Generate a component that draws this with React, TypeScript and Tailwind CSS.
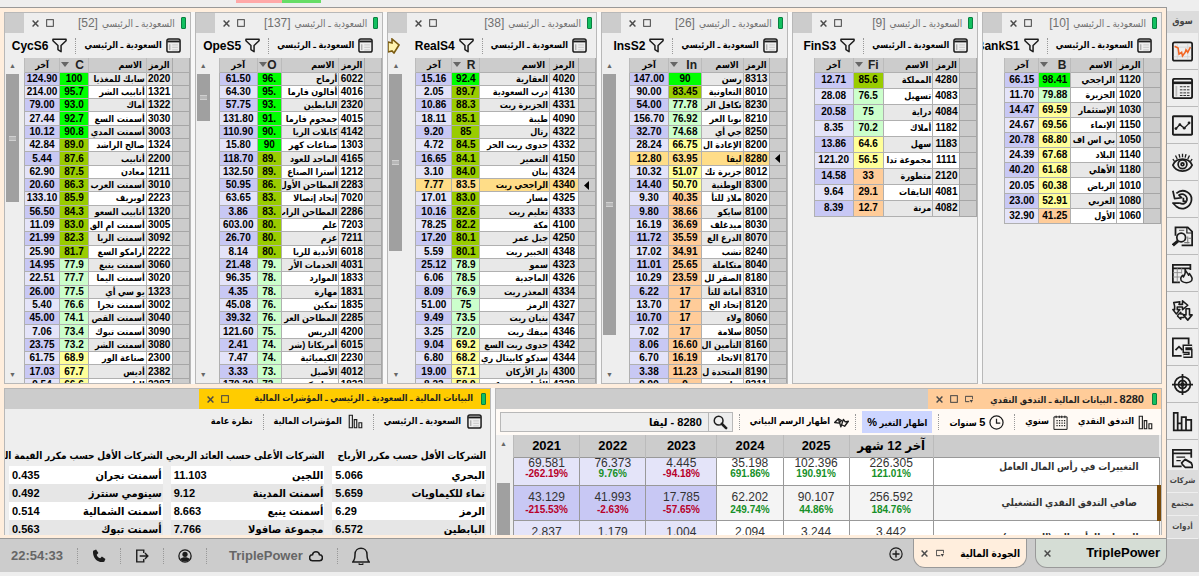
import type { ReactNode } from 'react';
import clsx from 'clsx';

type Row = [last: string, score: string, name: string, code: string];

interface MarketPanelProps {
  tag: string;
  count: number;
  column: string;
  rows: Row[];
  selected?: string;
  marker?: boolean;
  thumb?: string;
  gutter: string;
  tableHeight: string;
  widths: [last: string, score: string, code: string];
}

const cyclical: Row[] = [
  ['124.90', '100', 'سابك للمغذيا', '2020'],
  ['214.00', '95.7', 'أنابيب الشر', '1321'],
  ['79.00', '93.0', 'أماك', '1322'],
  ['27.44', '92.7', 'أسمنت السع', '3030'],
  ['10.12', '90.8', 'أسمنت المدي', '3003'],
  ['42.84', '89.0', 'صالح الراشد', '1324'],
  ['5.44', '87.6', 'أنابيب', '2200'],
  ['62.90', '87.5', 'معادن', '1211'],
  ['20.60', '86.3', 'أسمنت العرب', '3010'],
  ['133.10', '85.9', 'لوبريف', '2223'],
  ['56.50', '84.3', 'أنابيب السعو', '1320'],
  ['11.09', '83.0', 'أسمنت ام الق', '3005'],
  ['21.99', '82.3', 'أسمنت الريا', '3092'],
  ['25.90', '81.7', 'أرامكو السع', '2222'],
  ['14.95', '77.9', 'أسمنت ينبع', '3060'],
  ['22.51', '77.7', 'أسمنت اليما', '3020'],
  ['26.00', '77.5', 'يو سي أي', '1323'],
  ['5.40', '76.6', 'أسمنت نجرا', '3002'],
  ['45.00', '74.1', 'أسمنت القص', '3040'],
  ['7.06', '73.4', 'أسمنت تبوك', '3090'],
  ['23.75', '73.2', 'أسمنت الشر', '3080'],
  ['61.75', '68.9', 'صناعة الور', '2300'],
  ['17.03', '67.7', 'أديس', '2382'],
  ['9.54', '66.6', 'الباحة', '2287'],
];

const operations: Row[] = [
  ['61.50', '96.', 'أرماح', '6022'],
  ['64.30', '95.', 'أفالون فارما', '4016'],
  ['57.75', '93.', 'البابطين', '2320'],
  ['131.80', '91.', 'جمجوم فارما', '4015'],
  ['110.90', '90.', 'كابلات الريا', '4142'],
  ['15.80', '90', 'صناعات كهر', '1303'],
  ['118.70', '89.', 'الماجد للعود', '4165'],
  ['132.50', '89.', 'أسترا الصناع', '1212'],
  ['50.95', '86.', 'المطاحن الأول', '2283'],
  ['63.65', '83.', 'إتحاد إتصالا', '7020'],
  ['3.86', '83.', 'المطاحن الراب', '2286'],
  ['603.00', '80.', 'علم', '7203'],
  ['26.70', '80.', 'عزم', '7211'],
  ['8.14', '80.', 'الأندية للريا', '6018'],
  ['21.48', '79.', 'الخدمات الأر', '4031'],
  ['96.35', '78.', 'الموارد', '1833'],
  ['4.35', '78.', 'مهارة', '1831'],
  ['45.08', '76.', 'تمكين', '1835'],
  ['39.32', '76.', 'المطاحن العر', '2285'],
  ['121.60', '75.', 'الدريس', '4200'],
  ['2.41', '74.', 'أمريكانا (شر', '6015'],
  ['7.47', '74.', 'الكيميائية', '2230'],
  ['3.33', '73.', 'الأصيل', '4012'],
  ['170.20', '72.', 'سماسكو', '1832'],
];

const realEstate: Row[] = [
  ['15.16', '92.4', 'العقارية', '4020'],
  ['2.05', '89.7', 'درب السعودية', '4130'],
  ['10.86', '88.3', 'الجزيرة ريت', '4331'],
  ['18.11', '85.1', 'طيبة', '4090'],
  ['9.20', '85', 'رتال', '4322'],
  ['4.72', '84.5', 'جدوى ريت الحر', '4332'],
  ['16.65', '84.1', 'التعمير', '4150'],
  ['3.10', '84.0', 'بنان', '4324'],
  ['7.77', '83.5', 'الراجحي ريت', '4340'],
  ['17.01', '83.0', 'مسار', '4325'],
  ['10.16', '82.6', 'تعليم ريت', '4333'],
  ['78.25', '82.2', 'مكة', '4100'],
  ['17.20', '80.1', 'جبل عمر', '4250'],
  ['5.59', '80.1', 'الخبير ريت', '4348'],
  ['25.12', '78.9', 'سمو', '4323'],
  ['6.06', '78.5', 'الماجدية', '4326'],
  ['8.09', '76.9', 'المعذر ريت', '4334'],
  ['51.00', '75', 'الرمز', '4327'],
  ['9.49', '73.5', 'بنيان ريت', '4347'],
  ['3.25', '72.0', 'ميفك ريت', '4346'],
  ['9.04', '69.2', 'جدوى ريت السع', '4342'],
  ['6.80', '68.2', 'سدكو كابيتال ري', '4344'],
  ['19.00', '67.1', 'دار الأركان', '4300'],
  ['8.22', '58.9', 'الأهلي ريت 1', '4338'],
];

const insurance: Row[] = [
  ['147.00', '90', 'رسن', '8313'],
  ['90.00', '83.45', 'التعاونية', '8010'],
  ['54.00', '77.78', 'تكافل الر', '8230'],
  ['156.70', '76.92', 'بوبا العر', '8210'],
  ['32.70', '74.68', 'جي أي', '8250'],
  ['28.24', '66.75', 'الإعادة ال', '8200'],
  ['12.80', '63.95', 'ليفا', '8280'],
  ['10.32', '51.07', 'جزيرة تك', '8012'],
  ['14.40', '50.70', 'الوطنية', '8300'],
  ['9.30', '40.35', 'ملاذ للتأ', '8020'],
  ['9.80', '38.66', 'سايكو', '8100'],
  ['16.19', '36.69', 'ميدغلف', '8030'],
  ['11.72', '35.59', 'الدرع الع', '8070'],
  ['17.02', '34.91', 'تشب', '8240'],
  ['11.01', '25.65', 'متكاملة', '8040'],
  ['10.29', '23.59', 'الصقر لل', '8180'],
  ['6.22', '17', 'أمانة للتأ', '8310'],
  ['13.70', '17', 'إتحاد الخ', '8120'],
  ['10.70', '17', 'ولاء', '8060'],
  ['7.02', '17', 'سلامة', '8050'],
  ['8.06', '16.60', 'التأمين ال', '8160'],
  ['6.70', '16.19', 'الاتحاد', '8170'],
  ['3.38', '11.23', 'المتحدة ل', '8190'],
  ['9.99', '9', 'عناية', '8311'],
];

const finance: Row[] = [
  ['12.71', '85.6', 'المملكة', '4280'],
  ['28.08', '76.5', 'تسهيل', '4083'],
  ['20.58', '75', 'دراية', '4084'],
  ['8.35', '70.2', 'أملاك', '1182'],
  ['13.86', '64.6', 'سهل', '1183'],
  ['121.20', '56.5', 'مجموعة تدا', '1111'],
  ['14.58', '33', 'متطورة', '2120'],
  ['9.64', '29.1', 'النايفات', '4081'],
  ['8.39', '12.7', 'مرنة', '4082'],
];

const banks: Row[] = [
  ['66.15', '98.41', 'الراجحي', '1120'],
  ['11.70', '79.88', 'الجزيرة', '1020'],
  ['14.47', '69.59', 'الإستثمار', '1030'],
  ['24.67', '69.56', 'الإنماء', '1150'],
  ['20.78', '68.80', 'بي اس اف', '1050'],
  ['24.39', '67.68', 'البلاد', '1140'],
  ['40.20', '61.68', 'الأهلي', '1180'],
  ['20.05', '60.38', 'الرياض', '1010'],
  ['23.00', '52.91', 'العربي', '1080'],
  ['32.90', '41.25', 'الأول', '1060'],
];

const indicators = [
  {
    title: 'الشركات الأقل حسب مكرر الأرباح',
    rows: [['البحري', '5.066'], ['نماء للكيماويات', '5.659'], ['الرمز', '6.29'], ['البابطين', '6.572']],
  },
  {
    title: 'الشركات الأعلى حسب العائد الربحي',
    rows: [['اللجين', '11.103'], ['أسمنت المدينة', '9.12'], ['أسمنت ينبع', '8.663'], ['مجموعة صافولا', '7.766']],
  },
  {
    title: 'الشركات الأقل حسب مكرر القيمة الد',
    rows: [['أسمنت نجران', '0.435'], ['سينومي سنترز', '0.492'], ['أسمنت الشمالية', '0.514'], ['أسمنت تبوك', '0.563']],
  },
];

const periods = ['آخر 12 شهر', '2025', '2024', '2023', '2022', '2021'];

const cashFlow = [
  {
    label: 'التغييرات في رأس المال العامل',
    cells: [['226.305', '121.01%'], ['102.396', '190.91%'], ['35.198', '691.86%'], ['4.445', '-94.18%'], ['76.373', '9.76%'], ['69.581', '-262.19%']],
  },
  {
    label: 'صافي التدفق النقدي التشغيلي',
    cells: [['256.592', '184.76%'], ['90.107', '44.86%'], ['62.202', '249.74%'], ['17.785', '-57.65%'], ['41.993', '-2.63%'], ['43.129', '-215.53%']],
  },
  {
    label: 'النفقات الرأسمالية (المستمرة)',
    cells: [['3.442', ''], ['3.244', ''], ['2.094', ''], ['1.004', ''], ['1.179', ''], ['2.837', '']],
  },
];

function scoreColor(score: string): string {
  const n = parseFloat(score);
  if (n >= 90) return 'bg-[#00ff00]';
  if (n >= 80) return 'bg-[#99cc00]';
  if (n >= 70) return 'bg-[#ccffcc]';
  if (n >= 50) return 'bg-[#ffff99]';
  return 'bg-[#ffcc99]';
}

/* ---------- icons ---------- */

function Svg({ size = 'size-[15px]', children }: { size?: string; children: ReactNode }) {
  return (
    <svg viewBox="0 0 24 24" className={`${size} shrink-0`} fill="none" stroke="#1c1c1c" strokeWidth={2} aria-hidden="true">
      {children}
    </svg>
  );
}

const TableIcon = () => (
  <Svg>
    <rect x="1.500" y="1.500" width="21" height="21" rx="3" strokeWidth="2.400" />
    <path d="M2 5.500h20" strokeWidth="3" />
    <path d="M6 10v9" stroke="#aaa" />
    <path d="M10 11h9M10 15h9M10 19h9" stroke="#d0d0d0" />
  </Svg>
);

const FunnelIcon = () => (
  <Svg>
    <path d="M1.500 2h21v2.500L14.500 12v10l-5-3.500V12L1.500 4.500z" strokeWidth="2.400" strokeLinejoin="round" />
  </Svg>
);

const ColumnsIcon = () => (
  <Svg>
    <path d="M2 2h5v20H2zM10 9h4v13h-4zM17.500 14h4.500v8h-4.500z" strokeWidth="1.800" />
  </Svg>
);

const CloseIcon = () => (
  <Svg size="size-[7px]">
    <path d="M2 2l20 20M22 2L2 22" stroke="#4a4a4a" strokeWidth="5" />
  </Svg>
);

const RestoreIcon = () => (
  <Svg size="size-2">
    <rect x="2" y="2" width="20" height="20" stroke="#444" strokeWidth="3" />
  </Svg>
);

const PopOutIcon = () => (
  <Svg size="size-2">
    <path d="M13 20H1V4h22v9" stroke="#444" strokeWidth="3" />
    <path d="M14 15h10l-5 8z" fill="#444" stroke="none" />
  </Svg>
);

const sideIcons: { label: string; art: ReactNode }[] = [
  {
    label: 'شاشة السوق',
    art: (
      <>
        <rect x="1" y="1.500" width="22" height="21" rx="2" />
        <path d="M18 3v18M2 18h20M6 3v18M2 7h20" stroke="#ccc" strokeWidth="0.8" />
        <path d="M3 6l4 2 1 7 3-2 1 4 3-4 1-3 2 3 3-6" stroke="#f26522" strokeWidth="1.800" />
      </>
    ),
  },
  {
    label: 'قائمة الأسعار',
    art: (
      <>
        <rect x="1" y="1" width="22" height="22" rx="2" strokeWidth="2.2" />
        <path d="M1 5.500h22" strokeWidth="3" />
        <path d="M5 9v12" stroke="#bbb" strokeWidth="2" />
        <path d="M9 10h12M9 13.500h12M9 17h12M9 20h12" strokeWidth="1" strokeDasharray="3 1" />
      </>
    ),
  },
  {
    label: 'الرسم البياني',
    art: (
      <>
        <rect x="1" y="1.500" width="22" height="21" rx="1" strokeWidth="2.2" />
        <path d="M4 16l5-5 5 4 6-6" strokeWidth="1.6" />
        <g fill="#1c1c1c" stroke="none">
          <circle cx="4.500" cy="15.500" r="1.6" />
          <circle cx="9" cy="11" r="1.6" />
          <circle cx="14" cy="15" r="1.6" />
          <circle cx="19.500" cy="9" r="1.6" />
        </g>
      </>
    ),
  },
  {
    label: 'المراقبة',
    art: (
      <>
        <path d="M1 15c4-9 18-9 22 0c-4 9-18 9-22 0z" />
        <circle cx="12" cy="14" r="5" />
        <circle cx="12" cy="14" r="1.600" />
        <path d="M3 11L1 8M6 8L4 4M9 6.500L8 2.500M12 6V2M15 6.500l1-4M18 8l2-4M21 11l2-3" strokeWidth="1.5" />
      </>
    ),
  },
  {
    label: 'السجل',
    art: (
      <>
        <path d="M5 5c8-7 19 0 17 9c-2 8-11 11-17 6l-4-4h8" strokeLinejoin="round" />
        <path d="M1 2l2 9 8-1-3-3c5-3 10 1 9 6c-1 4-5 5-8 3" strokeLinejoin="round" />
        <path d="M13 10v4h3" />
      </>
    ),
  },
  {
    label: 'البحث',
    art: (
      <>
        <path d="M4 11V1.500h14l5 5V22H11" />
        <path d="M17 2v6h6" strokeWidth="1.400" />
        <path d="M8 5h6M18 12v8M14 19h6M19 14h3" stroke="#777" strokeWidth="1.2" />
        <circle cx="10.500" cy="13" r="5" />
        <path d="M7 17l-6 5" strokeWidth="3.400" />
      </>
    ),
  },
  {
    label: 'الأكثر نشاطا',
    art: (
      <>
        <path d="M9 22H1V2h20v6M1 6h20" />
        <path d="M6 6v16M11 6v6M1 11h10M1 16h8" stroke="#888" strokeWidth="1" />
        <path d="M15 7c1 4 3 4 4 7l1-2c1 2 3 4 3 6c0 6-13 6-13 0c0-2 1-3 2-4l1 2c2-3 3-5 2-9z" fill="#eee" strokeLinejoin="round" strokeWidth="1.800" />
      </>
    ),
  },
  {
    label: 'التحويل',
    art: (
      <>
        <path d="M2 3l7-1-1 3h4V1l6 5-6 5V8H6v3h3l-4 5-4-5h2V7z" strokeLinejoin="round" strokeWidth="1.800" />
        <path d="M16 10h4v7h3l-5 6-5-6h3zM6 18l4-4v2h3M6 18l4 4v-2h4" strokeLinejoin="round" strokeWidth="1.800" />
      </>
    ),
  },
  {
    label: 'الاستراتيجيات',
    art: (
      <>
        <path d="M11 21.500H1V1.500h18v7" />
        <path d="M4 15l4-4 4 4" />
        <path d="M23 11h-8.500v5H21v5.500h-8" strokeWidth="5" />
        <path d="M23 11h-8.500v5H21v5.500h-8" stroke="#eee" strokeWidth="1.6" />
      </>
    ),
  },
  {
    label: 'الأهداف',
    art: (
      <>
        <circle cx="12" cy="12" r="9" />
        <circle cx="12" cy="12" r="4.500" />
        <circle cx="12" cy="12" r="1.500" />
        <path d="M12 0v24M0 12h24" />
      </>
    ),
  },
  {
    label: 'القوائم المالية',
    art: <path d="M2 2h4.500v20H2zM6.500 14H11v8H6.500M11 7h5v15h-5zM16 10h6v12h-6" />,
  },
  {
    label: 'الأوامر',
    art: (
      <>
        <path d="M22 11V2H1v19h10M1 6h21" />
        <path d="M5 10.500h10M5 14.500h5" strokeWidth="1.4" />
        <path d="M11 17l4-4 7 4 2 5h-9l-3-3z" fill="#eee" strokeLinejoin="round" />
      </>
    ),
  },
];

/* ---------- shared pieces ---------- */

const Dots = () => <span className="h-4 shrink-0 border-s border-dotted border-[#999]" />;

function WindowButtons({ popOut = false }: { popOut?: boolean }) {
  return (
    <div className="ms-auto flex shrink-0 items-center gap-[7px] ps-1">
      {popOut && <button aria-label="فصل"><PopOutIcon /></button>}
      <button aria-label="تكبير"><RestoreIcon /></button>
      <button aria-label="إغلاق"><CloseIcon /></button>
    </div>
  );
}

const Pill = () => <span className="h-3 w-[5px] shrink-0 rounded-[1px] border border-[#0a8040] bg-[#12c060]" />;

function ScrollBar({ thumb, className }: { thumb?: string; className?: string }) {
  return (
    <div className={clsx('flex shrink-0 flex-col items-start overflow-hidden', className)} dir="ltr">
      {thumb && (
        <>
          <span className="flex h-4 w-[15px] items-center justify-center text-[7px] text-[#666]">▲</span>
          <div className={clsx('ms-px flex w-[13px] shrink-0 items-center justify-center bg-[#a0a0a0]', thumb)}>
            <span className="h-[5px] w-[7px] border-y border-[#d0d0d0] bg-[#b8b8b8]" />
          </div>
          <span className="mt-auto flex h-4 w-[15px] items-center justify-center text-[7px] text-[#666]">▼</span>
        </>
      )}
    </div>
  );
}

function MarketPanel({ tag, count, column, rows, selected, marker, thumb, gutter, tableHeight, widths }: MarketPanelProps) {
  return (
    <section className="flex min-w-0 flex-col overflow-hidden border border-[#b8b8b8] bg-[#eee]">
      <header className="flex h-5 shrink-0 bg-[#ccc] pe-[19px]">
        <div className="flex min-w-0 flex-1 items-center gap-1 bg-[#eee] ps-1 pe-2 text-[10px] text-[#707070]">
          <Pill />
          <h2 className="ms-[2px] whitespace-nowrap">السعودية ـ الرئيسي</h2>
          <span className="text-[12px]">[{count}]</span>
          <WindowButtons />
        </div>
      </header>

      <div className="relative flex h-[25px] shrink-0 items-center gap-2 overflow-hidden ps-[9px]">
        <button className="flex shrink-0 items-center gap-1 text-[9px] font-bold whitespace-nowrap">
          <TableIcon />
          السعودية ـ الرئيسي
        </button>
        <Dots />
        <button className="flex shrink-0 items-center gap-1 text-[12px] font-bold">
          <FunnelIcon />
          {tag}
        </button>
        {marker && (
          <svg viewBox="0 0 12 16" className="absolute left-0 h-4 w-3" aria-hidden="true">
            <path d="M0 4l4 1V1l7 6-5 8-2-2-4 1z" fill="#fff3b0" stroke="#7a5a10" strokeWidth="1.6" />
          </svg>
        )}
      </div>

      <div className="flex min-h-0 flex-1 overflow-hidden">
        <div className="min-w-0 flex-1">
          <table className={clsx('w-full table-fixed border-collapse text-[10px] leading-[12px] font-bold', tableHeight)}>
            <colgroup>
              <col className="w-[17px]" />
              <col className={widths[2]} />
              <col />
              <col className={widths[1]} />
              <col className={widths[0]} />
            </colgroup>
            <thead>
              <tr className="h-[14px] bg-[#ccc]">
                <th className="border border-t-0 border-[#aaa]" />
                <th className="border-x border-[#bbb] p-0 text-[9px]">الرمز</th>
                <th className="border-x border-[#bbb] p-0 px-1 text-start text-[9px]">الاسم</th>
                <th className="border-x border-[#bbb] p-0 text-[12px] text-[#222]">
                  <span className="flex items-center justify-between ps-1 pe-px">
                    {column}
                    <svg viewBox="0 0 8 5" className="h-[5px] w-2 shrink-0" aria-hidden="true">
                      <path d="M0 0h8L4 5z" fill="#666" />
                    </svg>
                  </span>
                </th>
                <th className="border-x border-[#bbb] p-0 text-[9px]">آخر</th>
              </tr>
            </thead>
            <tbody>
              {rows.map(([last, score, name, code], i) => {
                const on = code === selected;
                const plain = on ? 'bg-[#ffdd88]' : i % 2 ? 'bg-white' : 'bg-[#e8e8e8]';
                return (
                  <tr key={code}>
                    <td className="border border-[#a6a6a6] bg-[#ccc] p-0">
                      {on && (
                        <svg viewBox="0 0 5 9" className="mx-auto h-[9px] w-[5px]" aria-hidden="true">
                          <path d="M5 0v9L0 4.500z" />
                        </svg>
                      )}
                    </td>
                    <td className={clsx('border border-[#b0b0b0] p-0 text-center', plain)}>{code}</td>
                    <td className={clsx('overflow-hidden border border-[#b0b0b0] p-0 px-px text-start text-[9px] whitespace-nowrap', plain)}>
                      {name}
                    </td>
                    <td className={clsx('border border-[#b0b0b0] p-0 text-center', on ? plain : scoreColor(score))} dir="ltr">
                      {score}
                    </td>
                    <td className={clsx('border border-[#b0b0b0] p-0 text-center', on ? plain : i % 2 ? 'bg-[#e4e4f9]' : 'bg-[#c8c8f4]')}>
                      {last}
                    </td>
                  </tr>
                );
              })}
            </tbody>
          </table>
        </div>
        <ScrollBar thumb={thumb} className={gutter} />
      </div>
    </section>
  );
}

function IndicatorsPanel() {
  return (
    <section className="flex min-w-0 flex-col overflow-hidden border border-b-0 border-[#b8b8b8] bg-[#eee]">
      <header className="flex h-5 shrink-0 bg-[#ccc]">
        <div className="flex basis-3/5 items-center gap-1 bg-[#ffcc00] ps-1 pe-2 text-[9px] font-bold text-[#222]">
          <Pill />
          <h2 className="ms-1 whitespace-nowrap">البيانات المالية ـ السعودية ـ الرئيسي ـ المؤشرات المالية</h2>
          <WindowButtons />
        </div>
      </header>
      <div className="flex h-[25px] shrink-0 items-center gap-[10px] px-2 text-[9px] font-bold whitespace-nowrap">
        <button className="flex items-center gap-[6px]"><TableIcon />السعودية ـ الرئيسي</button>
        <Dots />
        <button className="flex items-center gap-[6px]"><ColumnsIcon />المؤشرات المالية</button>
        <Dots />
        <button>نظرة عامة</button>
      </div>
      <div className="grid min-h-0 flex-1 grid-cols-3 gap-2 ps-1 pe-1 pt-3">
        {indicators.map(({ title, rows }) => (
          <table key={title} className="w-full table-fixed self-start text-[11px] leading-[18px] font-bold">
            <thead>
              <tr className="h-5">
                <th colSpan={2} className="p-0 text-start text-[10px] whitespace-nowrap">{title}</th>
              </tr>
            </thead>
            <tbody>
              {rows.map(([name, value], i) => (
                <tr key={name} className={i % 2 ? 'bg-[#e6e6e6]' : 'bg-white'}>
                  <td className="w-2/3 p-0 px-px whitespace-nowrap">{name}</td>
                  <td className="p-0 px-[3px] text-left">{value}</td>
                </tr>
              ))}
            </tbody>
          </table>
        ))}
      </div>
    </section>
  );
}

function CashFlowPanel() {
  return (
    <section className="flex min-w-0 flex-col overflow-hidden border border-b-0 border-[#b8b8b8] bg-[#eee]">
      <header className="flex h-5 shrink-0 bg-[#ccc]">
        <div className="flex basis-[35%] items-center gap-1 bg-[#ffcc99] ps-1 pe-2 text-[9px] font-bold text-[#222]">
          <Pill />
          <h2 className="ms-1 whitespace-nowrap">
            <span className="text-[11px]">8280</span> ـ البيانات المالية ـ التدفق النقدي
          </h2>
          <WindowButtons popOut />
        </div>
      </header>
      <div className="flex h-[26px] shrink-0 items-center gap-[10px] bg-[#fffaf5] px-2 pe-1 text-[9px] font-bold whitespace-nowrap">
        <button className="flex items-center gap-1"><ColumnsIcon />التدفق النقدي</button>
        <button className="flex items-center gap-1">
          <Svg>
            <path d="M1.500 3h21v20h-21z" strokeWidth="1.600" />
            <path d="M6.500 8v12M10.500 8v12M14.500 8v12M18.500 8v12" strokeDasharray="2 2" />
            <path d="M5 1v4M10 1v4M14 1v4M19 1v4" strokeWidth="1.600" />
          </Svg>
          سنوي
        </button>
        <Dots />
        <button className="flex items-center gap-1">
          <Svg>
            <circle cx="12" cy="12" r="10.500" />
            <path d="M12 6v7h6" />
          </Svg>
          <span><span className="text-[11px]">5</span> سنوات</span>
        </button>
        <Dots />
        <div className="-mx-1 flex items-center gap-[6px]">
          <button className="h-[22px] bg-[#ccd5ff] px-[5px]">اظهار التغير <span className="text-[11px]">%</span></button>
          <Dots />
        </div>
        <button className="flex items-center gap-1">
          <Svg>
            <path d="M1 12l6-6 5 3-4 4zM7 6l4 13 4-12 3 4 5-1-6 8-4-2" strokeWidth="2.200" strokeLinejoin="round" />
          </Svg>
          اظهار الرسم البياني
        </button>
        <Dots />
        <form className="-ms-1 flex h-5 min-w-0 flex-1 border border-[#b8b8b8] bg-[#eee]" onSubmit={(e) => e.preventDefault()}>
          <button className="flex w-6 shrink-0 items-center justify-center border-e border-[#b8b8b8]" aria-label="بحث">
            <Svg>
              <circle cx="9" cy="9" r="7" strokeWidth="2.4" />
              <path d="M14 14l7 7" strokeWidth="4" strokeLinecap="round" />
            </Svg>
          </button>
          <input aria-label="الشركة" defaultValue="8280 - ليفا" className="min-w-0 flex-1 bg-transparent px-[6px] text-[11px] font-bold outline-none" />
        </form>
      </div>
      <div className="flex min-h-0 flex-1 overflow-hidden">
        <div className="min-w-0 flex-1">
          <table className="w-full table-fixed border-collapse text-center">
            <colgroup>
              <col className="w-[35%]" />
              <col className="w-[13%]" />
              <col />
              <col />
              <col className="w-[11%]" />
              <col />
              <col />
            </colgroup>
            <thead>
              <tr className="h-[22px] bg-[#ccc] text-[13px] font-bold">
                <th className="p-0"><span className="sr-only">البند</span></th>
                {periods.map((p) => (
                  <th key={p} className="border-x border-[#bbb] p-0">{p}</th>
                ))}
              </tr>
            </thead>
            <tbody>
              {cashFlow.map(({ label, cells }, r) => (
                <tr
                  key={label}
                  className={clsx('align-top text-[#333]', r === 0 ? 'h-[28px]' : 'h-[35px]', r === 1 ? 'bg-[#f4f4f4]' : 'bg-white')}
                >
                  <th
                    scope="row"
                    className={clsx(
                      'border border-[#999] px-5 text-start text-[10px] leading-[18px] font-bold',
                      r === 0 ? 'py-0' : 'py-2',
                      r === 1 && 'border-s-4 border-s-[#7a4a08]',
                    )}
                  >
                    {label}
                  </th>
                  {cells.map(([value, change], c) => (
                    <td
                      key={c}
                      dir="ltr"
                      className={clsx('border border-[#999] p-0', r > 0 && 'pt-[5px]', c > 2 && (r === 1 ? 'bg-[#c8c8f4]' : 'bg-[#e4e4f9]'))}
                    >
                      <div className={clsx('text-[12px]', r === 0 ? 'leading-[10px]' : 'leading-[13px]')}>{value}</div>
                      <div className={clsx('text-[10px] leading-[12px] font-bold', change.startsWith('-') ? 'text-[#b8002a]' : 'text-[#169028]')}>
                        {change}
                      </div>
                    </td>
                  ))}
                </tr>
              ))}
            </tbody>
          </table>
        </div>
        <div className="flex w-[17px] shrink-0 flex-col" dir="ltr">
          <span className="flex h-12 w-[15px] shrink-0 justify-center pt-1 text-[7px] text-[#666]">▲</span>
          <div className="ms-px w-[13px] flex-1 bg-[#a0a0a0]" />
        </div>
      </div>
    </section>
  );
}

function Sidebar() {
  return (
    <nav className="mt-1 flex w-8 shrink-0 flex-col border-s border-[#ddd] bg-[#eee] text-[8px] font-bold text-[#444]">
      <button className="h-[22px] shrink-0 bg-[#dcdcdc] text-[9px]">سوق</button>
      <div className="flex min-h-0 flex-1 flex-col overflow-hidden">
        {sideIcons.map(({ label, art }) => (
          <button key={label} aria-label={label} className="flex h-[37px] shrink-0 items-center justify-center border-b border-[#bbb]">
            <Svg size="size-[21px]">{art}</Svg>
          </button>
        ))}
      </div>
      {['شركات', 'مجتمع', 'أدوات'].map((label) => (
        <button key={label} className="h-[23px] shrink-0 border-b border-[#eee] bg-[#dcdcdc]">{label}</button>
      ))}
    </nav>
  );
}

function Footer() {
  return (
    <footer className="flex h-[33px] shrink-0 items-center bg-[#ccc] ps-8 text-[13px] font-bold text-[#666]">
      <div className="flex gap-2 self-start">
        <div className="flex h-[29px] w-[132px] items-center justify-between rounded-b-xl border border-t-0 border-[#999] bg-[#d5ddd5] ps-[6px] pe-2 text-black">
          <button>TriplePower</button>
          <button aria-label="إغلاق"><CloseIcon /></button>
        </div>
        <div className="flex h-[29px] w-[114px] items-center gap-2 rounded-b-xl border border-t-0 border-[#999] bg-[#ffeedd] ps-[6px] pe-[7px] text-[10px] text-black">
          <button className="me-auto whitespace-nowrap">الجودة المالية</button>
          <button aria-label="فصل"><PopOutIcon /></button>
          <button aria-label="إغلاق"><CloseIcon /></button>
        </div>
        <button aria-label="إضافة" className="ps-[2px]">
          <Svg size="size-3.5">
            <circle cx="12" cy="12" r="10.500" />
            <path d="M12 6v12M6 12h12" strokeWidth="2.400" />
          </Svg>
        </button>
      </div>
      <div className="ms-auto flex items-center gap-[14px] pe-[11px]">
        <button aria-label="التنبيهات">
          <Svg size="size-[18px]">
            <path d="M1 20c3-3 3-5 3-10c0-11 16-11 16 0c0 5 0 7 3 10zM9 22c1 2 5 2 6 0" />
          </Svg>
        </button>
        <Dots />
        <button className="flex items-center gap-[6px] pe-2">
          <Svg size="size-3.5">
            <path d="M6 20a5 5 0 0 1 0-10c1-7 11-7 12 0a5 5 0 0 1 0 10z" strokeWidth="2.600" />
          </Svg>
          TriplePower
        </button>
        <Dots />
        <button aria-label="الحساب">
          <Svg size="size-3.5">
            <circle cx="12" cy="12" r="10.500" strokeWidth="2.200" />
            <circle cx="12" cy="9" r="4.500" fill="#1c1c1c" stroke="none" />
            <path d="M4 17c3-4 13-4 16 0c-4 6-12 6-16 0z" fill="#1c1c1c" stroke="none" />
          </Svg>
        </button>
        <Dots />
        <button aria-label="خروج">
          <Svg size="size-3.5">
            <path d="M15 7V2H3v20h12v-5" strokeWidth="2.400" />
            <path d="M8 12h14M17 7l5 5-5 5" strokeWidth="2.400" />
          </Svg>
        </button>
        <Dots />
        <button aria-label="اتصال">
          <Svg size="size-3.5">
            <path d="M2 3l5-2 4 6-3 3c1 3 3 5 6 6l3-3 6 4-2 5C9 25 0 13 2 3z" fill="#1c1c1c" stroke="none" />
          </Svg>
        </button>
        <Dots />
        <time dir="ltr">22:54:33</time>
      </div>
    </footer>
  );
}

export default function App() {
  return (
    <div dir="rtl" className="flex h-screen flex-col overflow-hidden bg-[#eee] font-['Liberation_Sans','DejaVu_Sans_Condensed','DejaVu_Sans',sans-serif] text-black">
      <div className="flex h-[7px] shrink-0 items-start" dir="ltr">
        <span className="ms-[236px] h-[3px] w-[46px] bg-[#ffa8a8]" />
        <span className="h-[3px] w-[39px] bg-[#66dd66]" />
      </div>
      <div className="flex min-h-0 flex-1">
        <Sidebar />
        <main className="grid min-w-0 flex-1 grid-rows-[minmax(0,372fr)_minmax(0,147fr)] gap-1 border border-e-0 border-[#999] bg-[#ffeedd] p-1 pb-[3px]">
          <div className="grid min-h-0 grid-cols-[minmax(0,180fr)_minmax(0,187fr)_minmax(0,187fr)_minmax(0,210fr)_minmax(0,189fr)_minmax(0,187fr)] gap-1 bg-[#f8f8f8]">
            <MarketPanel tag="BankS1" count={10} column="B" rows={banks} gutter="w-[21px]" tableHeight="h-[166px]" widths={['w-[34px]', 'w-8', 'w-[27px]']} />
            <MarketPanel tag="FinS3" count={9} column="Fi" rows={finance} gutter="w-[21px]" tableHeight="h-[159px]" widths={['w-[39px]', 'w-[30px]', 'w-[27px]']} />
            <MarketPanel tag="InsS2" count={26} column="In" rows={insurance} selected="8280" thumb="h-[261px]" gutter="w-[27px]" tableHeight="h-[334px]" widths={['w-[39px]', 'w-[33px]', 'w-[26px]']} />
            <MarketPanel tag="RealS4" count={38} column="R" rows={realEstate} selected="4340" marker thumb="h-[177px]" gutter="w-[27px]" tableHeight="h-[334px]" widths={['w-[36px]', 'w-7', 'w-[29px]']} />
            <MarketPanel tag="OpeS5" count={137} column="O" rows={operations} thumb="h-[47px]" gutter="w-[23px]" tableHeight="h-[334px]" widths={['w-[38px]', 'w-6', 'w-[26px]']} />
            <MarketPanel tag="CycS6" count={52} column="C" rows={cyclical} thumb="h-[128px]" gutter="w-[19px]" tableHeight="h-[334px]" widths={['w-[35px]', 'w-[29px]', 'w-[26px]']} />
          </div>
          <div className="grid min-h-0 grid-cols-[minmax(0,667fr)_minmax(0,487fr)] gap-1 bg-[#f8f8f8]">
            <CashFlowPanel />
            <IndicatorsPanel />
          </div>
        </main>
      </div>
      <Footer />
      <div className="h-1 shrink-0" />
    </div>
  );
}
